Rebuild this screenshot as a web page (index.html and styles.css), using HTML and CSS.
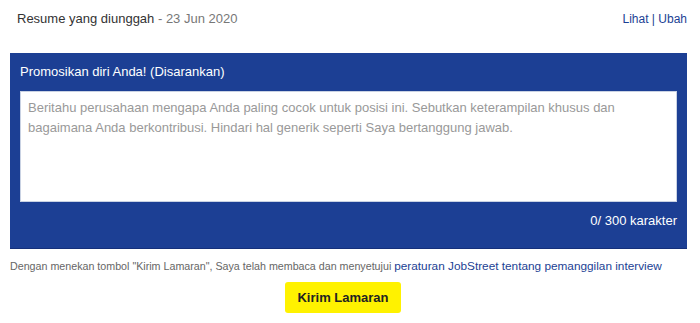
FILE: index.html
```html
<!doctype html>
<html>
<head>
<meta charset="utf-8">
<title>Kirim Lamaran</title>
<link rel="stylesheet" href="styles.css">
</head>

<body>
	<div id="wraper">
		<div class="resumeRow">
			<div class="resumeInfo">Resume yang diunggah <span class="date">- 23 Jun 2020</span></div>
			<div class="resumeLinks"><a href="javascript:;">Lihat</a> | <a href="javascript:;">Ubah</a></div>
		</div>
		<div class="promoBox">
			<div class="promoTitle">Promosikan diri Anda! (Disarankan)</div>
			<textarea class="promoText" placeholder="Beritahu perusahaan mengapa Anda paling cocok untuk posisi ini. Sebutkan keterampilan khusus dan bagaimana Anda berkontribusi. Hindari hal generik seperti Saya bertanggung jawab."></textarea>
			<div class="promoCount">0/ 300 karakter</div>
		</div>
		<p class="agree">Dengan menekan tombol "Kirim Lamaran", Saya telah membaca dan menyetujui <a href="javascript:;">peraturan JobStreet tentang pemanggilan interview</a></p>
		<div class="btnRow"><a href="javascript:;" class="sendBtn">Kirim Lamaran</a></div>
	</div>
</body>
</html>
```

FILE: styles.css
```css
body{ margin:0; background:#fff; font-family:"Liberation Sans",Arial,sans-serif; font-size:13px; color:#333;}
#wraper{ width:677px; margin:0 0 0 10px;}
a{ text-decoration:none; color:#1c3f94;}
.resumeRow{ display:flex; justify-content:space-between; padding:11px 0 0 7px; height:42px; line-height:16px;}
.resumeInfo{ color:#333;}
.resumeInfo .date{ color:#777;}
.resumeLinks{ font-size:12px; color:#1c3f94;}
.promoBox{ background:#1c3f94; padding:10px 10px 0; height:185px; border-bottom:1px solid #15307a;}
.promoTitle{ color:#fff; line-height:18px; padding-bottom:10px;}
.promoText{ display:block; box-sizing:border-box; width:657px; height:111px; margin:0; padding:6px 7px; border:1px solid #c9d2e3; resize:none; font-family:"Liberation Sans",Arial,sans-serif; font-size:13px; line-height:20px; color:#333;}
.promoText::placeholder{ color:#999;}
.promoCount{ color:#fff; text-align:right; padding-top:10px; line-height:18px;}
.agree{ margin:0; padding:9px 0 0; font-size:10.7px; line-height:16px; color:#666; white-space:nowrap;}
.agree a{ font-size:11.8px;}
.btnRow{ display:flex; justify-content:center; padding:8px 0 0; margin-left:-11px;}
.sendBtn{ display:block; width:116px; height:31px; line-height:31px; text-align:center; background:#fff200; border-radius:3px; font-weight:bold; font-size:13px; color:#222;}
```
